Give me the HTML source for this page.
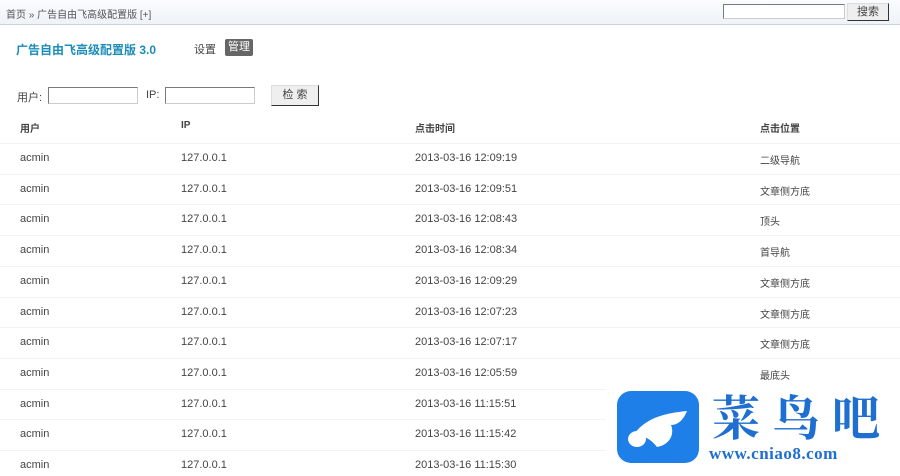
<!DOCTYPE html>
<html><head><meta charset="utf-8"><style>
body{margin:0;width:900px;height:476px;background:#fff;font-family:"Liberation Sans","Noto Sans CJK SC",sans-serif;font-size:11px;color:#444;position:relative;overflow:hidden}
.a{position:absolute;white-space:nowrap}
.top{position:absolute;left:0;top:0;width:900px;height:24px;background:linear-gradient(#fafcfe,#eef3f8);border-bottom:1px solid #c9d3dd}
input.t{position:absolute;border:1px solid #7a7a7a;border-right-color:#ccc;border-bottom-color:#ccc;background:#fff;height:13px;padding:0;margin:0}
.btn{position:absolute;border:1px solid #333;border-top-color:#ddd;border-left-color:#ddd;background:#efefef;font-size:11px;text-align:center;box-sizing:border-box}
.row{position:absolute;left:0;width:900px;height:1px;background:#f3f3f3}
</style></head><body>
<div class="top"></div>
<div class="a" style="left:6px;top:6px;font-size:10px;color:#555">首页 » 广告自由飞高级配置版 [+]</div>
<input class="t" style="left:723px;top:4px;width:120px">
<div class="btn" style="left:847px;top:3px;width:42px;height:18px;line-height:16px">搜索</div>
<div class="a" style="left:16px;top:41px;color:#1a8cb8;font-weight:bold;font-size:12px">广告自由飞高级配置版 3.0</div>
<div class="a" style="left:194px;top:41px">设置</div>
<div class="a" style="left:225px;top:39px;background:#666;color:#fff;padding:1px 3px;border-radius:2px;line-height:15px">管理</div>
<div class="a" style="left:17px;top:89px">用户:</div>
<input class="t" style="left:48px;top:87px;width:88px;height:15px">
<div class="a" style="left:146px;top:89px">IP:</div>
<input class="t" style="left:165px;top:87px;width:88px;height:15px">
<div class="btn" style="left:271px;top:85px;width:48px;height:21px;line-height:19px">检 索</div>
<div class="a" style="left:20px;top:120px;font-weight:bold;font-size:10px">用户</div>
<div class="a" style="left:181px;top:120px;font-weight:bold;font-size:10px">IP</div>
<div class="a" style="left:415px;top:120px;font-weight:bold;font-size:10px">点击时间</div>
<div class="a" style="left:760px;top:120px;font-weight:bold;font-size:10px">点击位置</div>
<div id="rows"></div>
<script>
var t=["12:09:19","12:09:51","12:08:43","12:08:34","12:09:29","12:07:23","12:07:17","12:05:59","11:15:51","11:15:42","11:15:30"];
var p=["二级导航","文章侧方底","顶头","首导航","文章侧方底","文章侧方底","文章侧方底","最底头","","",""];
var h="";
for(var i=0;i<11;i++){var y=152+i*30.7;
h+='<div class="row" style="top:'+(y-9)+'px"></div>';
h+='<div class="a" style="left:20px;top:'+y+'px">acmin</div><div class="a" style="left:181px;top:'+y+'px">127.0.0.1</div><div class="a" style="left:415px;top:'+y+'px">2013-03-16 '+t[i]+'</div><div class="a" style="left:760px;top:'+y+'px;font-size:10px">'+p[i]+'</div>';}
document.getElementById("rows").innerHTML=h;
</script>
<div class="a" style="left:606px;top:384px;width:294px;height:92px;background:#fff"></div>
<div class="a" style="left:617px;top:391px;width:82px;height:72px;background:#1e7fe8;border-radius:14px"></div>
<svg class="a" style="left:617px;top:391px" width="82" height="72"><path d="M18 42 C30 26 50 22 70 20 C66 30 60 34 54 34 C58 44 52 54 40 56 C34 48 28 46 18 42 Z" fill="#fff"/><ellipse cx="20" cy="48" rx="9" ry="8" fill="#fff"/></svg>
<div class="a" style="left:712px;top:386px;font-size:48px;font-weight:bold;color:#1e6fd0;letter-spacing:12px;font-family:'Noto Serif CJK SC',serif;line-height:58px">菜鸟吧</div>
<div class="a" style="left:709px;top:444px;font-size:17px;font-weight:bold;color:#1e6fd0;font-family:'Liberation Serif',serif;letter-spacing:0.5px">www.cniao8.com</div>
</body></html>
